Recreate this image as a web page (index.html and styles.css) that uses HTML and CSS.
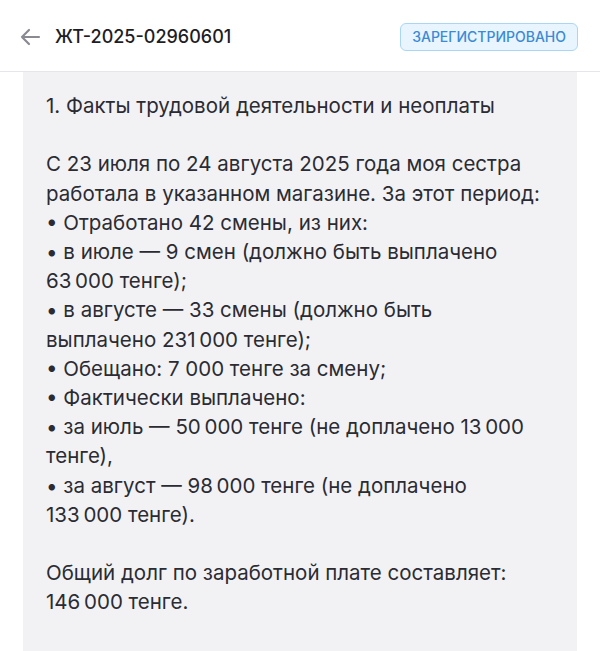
FILE: index.html
```html
<!DOCTYPE html>
<html lang="ru">
<head>
<meta charset="utf-8">
<link rel="stylesheet" href="styles.css">
</head>
<body>
<header class="top">
  <div class="left">
    <svg class="back" width="22" height="18" viewBox="0 0 22 18" aria-hidden="true">
      <path d="M20 9H3M10 2L3 9l7 7" fill="none" stroke="#8a8a92" stroke-width="2.2" stroke-linecap="round" stroke-linejoin="round"/>
    </svg>
    <h1 class="title">ЖТ-2025-02960601</h1>
  </div>
  <span class="badge">ЗАРЕГИСТРИРОВАНО</span>
</header>
<main class="card">
  <p>1. Факты трудовой деятельности и неоплаты</p>
  <p>С 23 июля по 24 августа 2025 года моя сестра<br>работала в указанном магазине. За этот период:<br>• Отработано 42 смены, из них:<br>• в июле — 9 смен (должно быть выплачено<br>63&#8239;000 тенге);<br>• в августе — 33 смены (должно быть<br>выплачено 231&#8239;000 тенге);<br>• Обещано: 7 000 тенге за смену;<br>• Фактически выплачено:<br>• за июль — 50&#8239;000 тенге (не доплачено 13&#8239;000<br>тенге),<br>• за август — 98&#8239;000 тенге (не доплачено<br>133&#8239;000 тенге).</p>
  <p>Общий долг по заработной плате составляет:<br>146&#8239;000 тенге.</p>
</main>
</body>
</html>
```
FILE: styles.css
```css
html, body {
  margin: 0;
  padding: 0;
  background: #ffffff;
  font-family: Inter, "Noto Sans", sans-serif;
  overflow: hidden;
}
.top {
  height: 72px;
  box-sizing: border-box;
  display: flex;
  align-items: center;
  justify-content: space-between;
  padding: 2px 22px 0 19px;
  border-bottom: 1.5px solid #e6e6ea;
}
.left {
  display: flex;
  align-items: center;
  gap: 14px;
}
.back {
  display: block;
}
.title {
  margin: 0;
  font-size: 18px;
  font-weight: 500;
  color: #1d1d26;
}
.badge {
  display: inline-block;
  padding: 5px 11px;
  font-size: 14px;
  font-weight: 500;
  color: #3a8ad6;
  background: #e9f5fe;
  border: 1px solid #a9d6f4;
  border-radius: 6px;
  line-height: 16px;
}
.card {
  margin: 0 23px;
  background: #f2f2f5;
  padding: 19px 23px 40px;
  min-height: 600px;
  color: #2b2b33;
  font-size: 20.5px;
  line-height: 29.2px;
}
.card p {
  margin: 0 0 29.2px;
}
```
